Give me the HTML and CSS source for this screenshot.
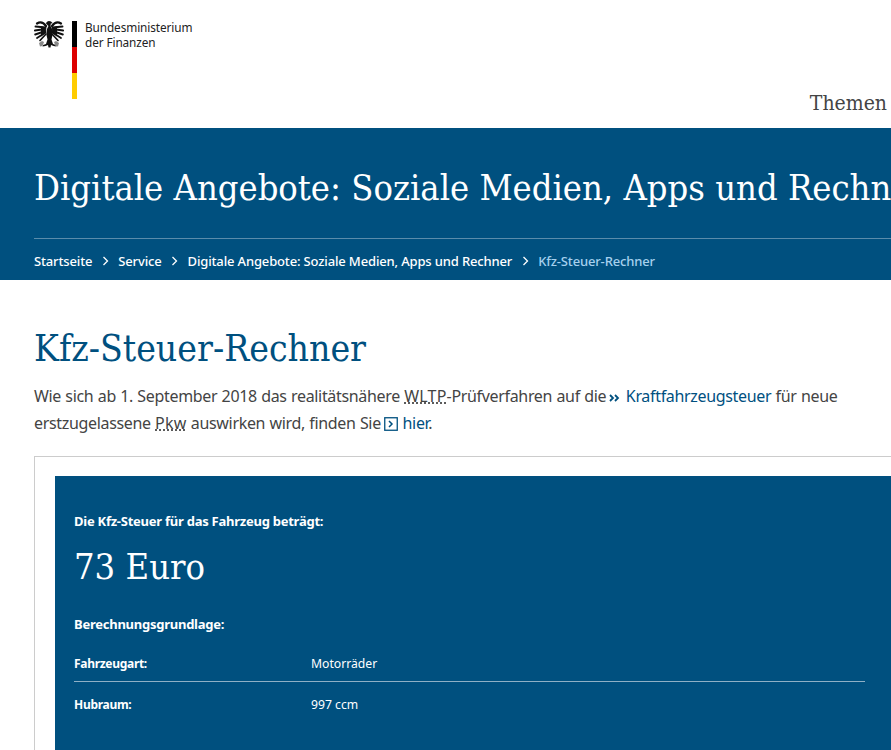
FILE: index.html
```html
<!DOCTYPE html>
<html lang="de">
<head>
<meta charset="utf-8">
<title>Kfz-Steuer-Rechner</title>
<link rel="stylesheet" href="styles.css">
</head>
<body>
<header class="top">
  <div class="logo">
    <svg class="eagle" width="30" height="29" viewBox="0 0 30 29" aria-hidden="true">
      <defs>
        <g id="wing" fill="none" stroke="#111" stroke-linecap="round">
          <path d="M12 6C9.500 2.500 6 1.500 3 3.500" stroke-width="2.200"/>
          <path d="M11.500 7.500 1.500 6.500" stroke-width="1.900"/>
          <path d="M11.500 9 .8 10.500" stroke-width="1.900"/>
          <path d="M11.500 11 1.200 14.500" stroke-width="1.900"/>
          <path d="M11.500 12.500 3 18" stroke-width="1.800"/>
          <path d="M12 14 6 20.500" stroke-width="1.700"/>
          <path d="M7 6l4 1.500v6l-4 3z" fill="#111" stroke="none"/>
        </g>
      </defs>
      <use href="#wing"/>
      <use href="#wing" transform="matrix(-1 0 0 1 30 0)"/>
      <path d="M12 3.500C12.500 1 15 .2 17 1.500l1.800 1.800-2 .3-.3 2.400 1.500 3 .5 6-1 4.500 1.500 4.500 3 1 .5 1.500-3-.5-2.500-1-.5 2.500h-2l-.5-2.500-2.500 1-3 .5.500-1.500 3-1 1.500-4.500-1-4.500.5-6 1.500-3z" fill="#111"/>
      <path d="M5 23l3-2 2 1-1.500 4-2.500.5zM25 23l-3-2-2 1 1.500 4 2.500.5z" fill="#888"/>
    </svg>
    <span class="flag"><i class="fb"></i><i class="fr"></i><i class="fy"></i></span>
    <span class="wordmark">Bundesministerium<br>der Finanzen</span>
  </div>
  <nav class="topnav">Themen</nav>
</header>
<section class="hero">
  <h2 class="hero-title">Digitale Angebote: Soziale Medien, Apps und Rechner</h2>
  <div class="crumbs">
    <a>Startseite</a><svg class="chev" width="7" height="10" viewBox="0 0 7 10"><path d="M1.500 1l4 4-4 4" fill="none" stroke="#fff" stroke-width="1.300"/></svg>
    <a>Service</a><svg class="chev" width="7" height="10" viewBox="0 0 7 10"><path d="M1.500 1l4 4-4 4" fill="none" stroke="#fff" stroke-width="1.300"/></svg>
    <a>Digitale Angebote: Soziale Medien, Apps und Rechner</a><svg class="chev" width="7" height="10" viewBox="0 0 7 10"><path d="M1.500 1l4 4-4 4" fill="none" stroke="#fff" stroke-width="1.300"/></svg>
    <span class="current">Kfz-Steuer-Rechner</span>
  </div>
</section>
<main class="content">
  <h1 class="title">Kfz-Steuer-Rechner</h1>
  <p class="intro">Wie sich ab 1. September 2018 das realitätsnähere <abbr>WLTP</abbr>-Prüfverfahren auf die <svg class="dbl" width="11" height="8" viewBox="0 0 11 8"><path d="M1 1l3 3-3 3M6 1l3 3-3 3" fill="none" stroke="#00507f" stroke-width="1.800"/></svg> <a class="link">Kraftfahrzeugsteuer</a> für neue<br>erstzugelassene <abbr>Pkw</abbr> auswirken wird, finden Sie <svg class="ext" width="14" height="14" viewBox="0 0 14 14"><rect x=".75" y=".75" width="12.500" height="12.500" fill="none" stroke="#00507f" stroke-width="1.300"/><path d="M5 4l3 3-3 3" fill="none" stroke="#00507f" stroke-width="1.500"/></svg> <a class="link">hier</a>.</p>
  <div class="frame">
    <div class="result">
      <p class="label">Die Kfz-Steuer für das Fahrzeug beträgt:</p>
      <p class="amount">73 Euro</p>
      <p class="label basis">Berechnungsgrundlage:</p>
      <div class="row ruled"><b>Fahrzeugart:</b><span>Motorräder</span></div>
      <div class="row"><b>Hubraum:</b><span>997 ccm</span></div>
    </div>
  </div>
</main>
</body>
</html>
```
FILE: styles.css
```css
html, body { margin: 0; height: 750px; overflow: hidden; background: #fff; }
body { font-family: "Noto Sans", sans-serif; color: #444; width: 891px; }
.top { height: 128px; position: relative; padding: 21px 0 0 34px; box-sizing: border-box; }
.logo { display: flex; align-items: flex-start; }
.eagle { margin-top: -1px; }
.flag { display: flex; flex-direction: column; width: 5px; margin-left: 8px; }
.flag i { display: block; height: 26px; }
.fb { background: #000; }
.fr { background: #d00; }
.fy { background: #fc0; }
.wordmark { margin-left: 8px; font-size: 11.800px; letter-spacing: -.1px; line-height: 15px; color: #222; margin-top: -1px; }
.topnav { position: absolute; right: 4px; top: 90px; font-family: "DejaVu Serif", serif; font-stretch: condensed; font-size: 21px; line-height: 26px; white-space: nowrap; color: #444; }
.hero { background: #00507f; height: 152px; box-sizing: border-box; padding: 36px 0 0 34px; overflow: hidden; }
.hero-title { margin: 0; font: 400 36px/48px "DejaVu Serif", serif; font-stretch: condensed; color: #fff; white-space: nowrap; }
.crumbs { margin-top: 26px; border-top: 1px solid #5a8cab; height: 41px; box-sizing: border-box; padding-top: 4px; display: flex; align-items: center; font-size: 13px; letter-spacing: -.15px; font-weight: 500; color: #fff; white-space: nowrap; }
.chev { margin: 0 9.500px; }
.current { color: #a6d0ee; }
.content { padding: 0 0 0 34px; }
.title { margin: 0; padding-top: 45px; font: 400 37px/48px "DejaVu Serif", serif; font-stretch: condensed; color: #00507f; }
.intro { margin: 10px 0 0; font-size: 16px; letter-spacing: -.33px; word-spacing: .5px; line-height: 27px; color: #444; white-space: nowrap; }
.intro abbr { text-decoration: underline dotted #333; letter-spacing: .2px; }
.dbl { margin-left: -1px; margin-right: 1px; }
.link { color: #00507f; }
.ext { vertical-align: -2px; margin-left: -1px; }
.frame { margin-top: 19px; border: 1px solid #ccc; border-right: 0; padding: 19px 0 0 20px; height: 300px; width: 860px; }
.result { background: #00507f; color: #fff; height: 300px; padding: 36px 0 0 19px; margin-right: -5px; box-sizing: border-box; }
.label { margin: 0; font-size: 13px; letter-spacing: -.25px; line-height: 18px; font-weight: 700; }
.amount { margin: 13px 0 0; font: 400 36px/48px "DejaVu Serif", serif; font-stretch: condensed; }
.basis { margin-top: 24px; }
.row { display: flex; font-size: 12.200px; line-height: 18px; padding: 14px 0 8px; width: 791px; }
.row b { width: 237px; font-size: 12px; letter-spacing: -.3px; }
.ruled { border-bottom: 1px solid #8fb0c6; margin-top: 8px; }
```
